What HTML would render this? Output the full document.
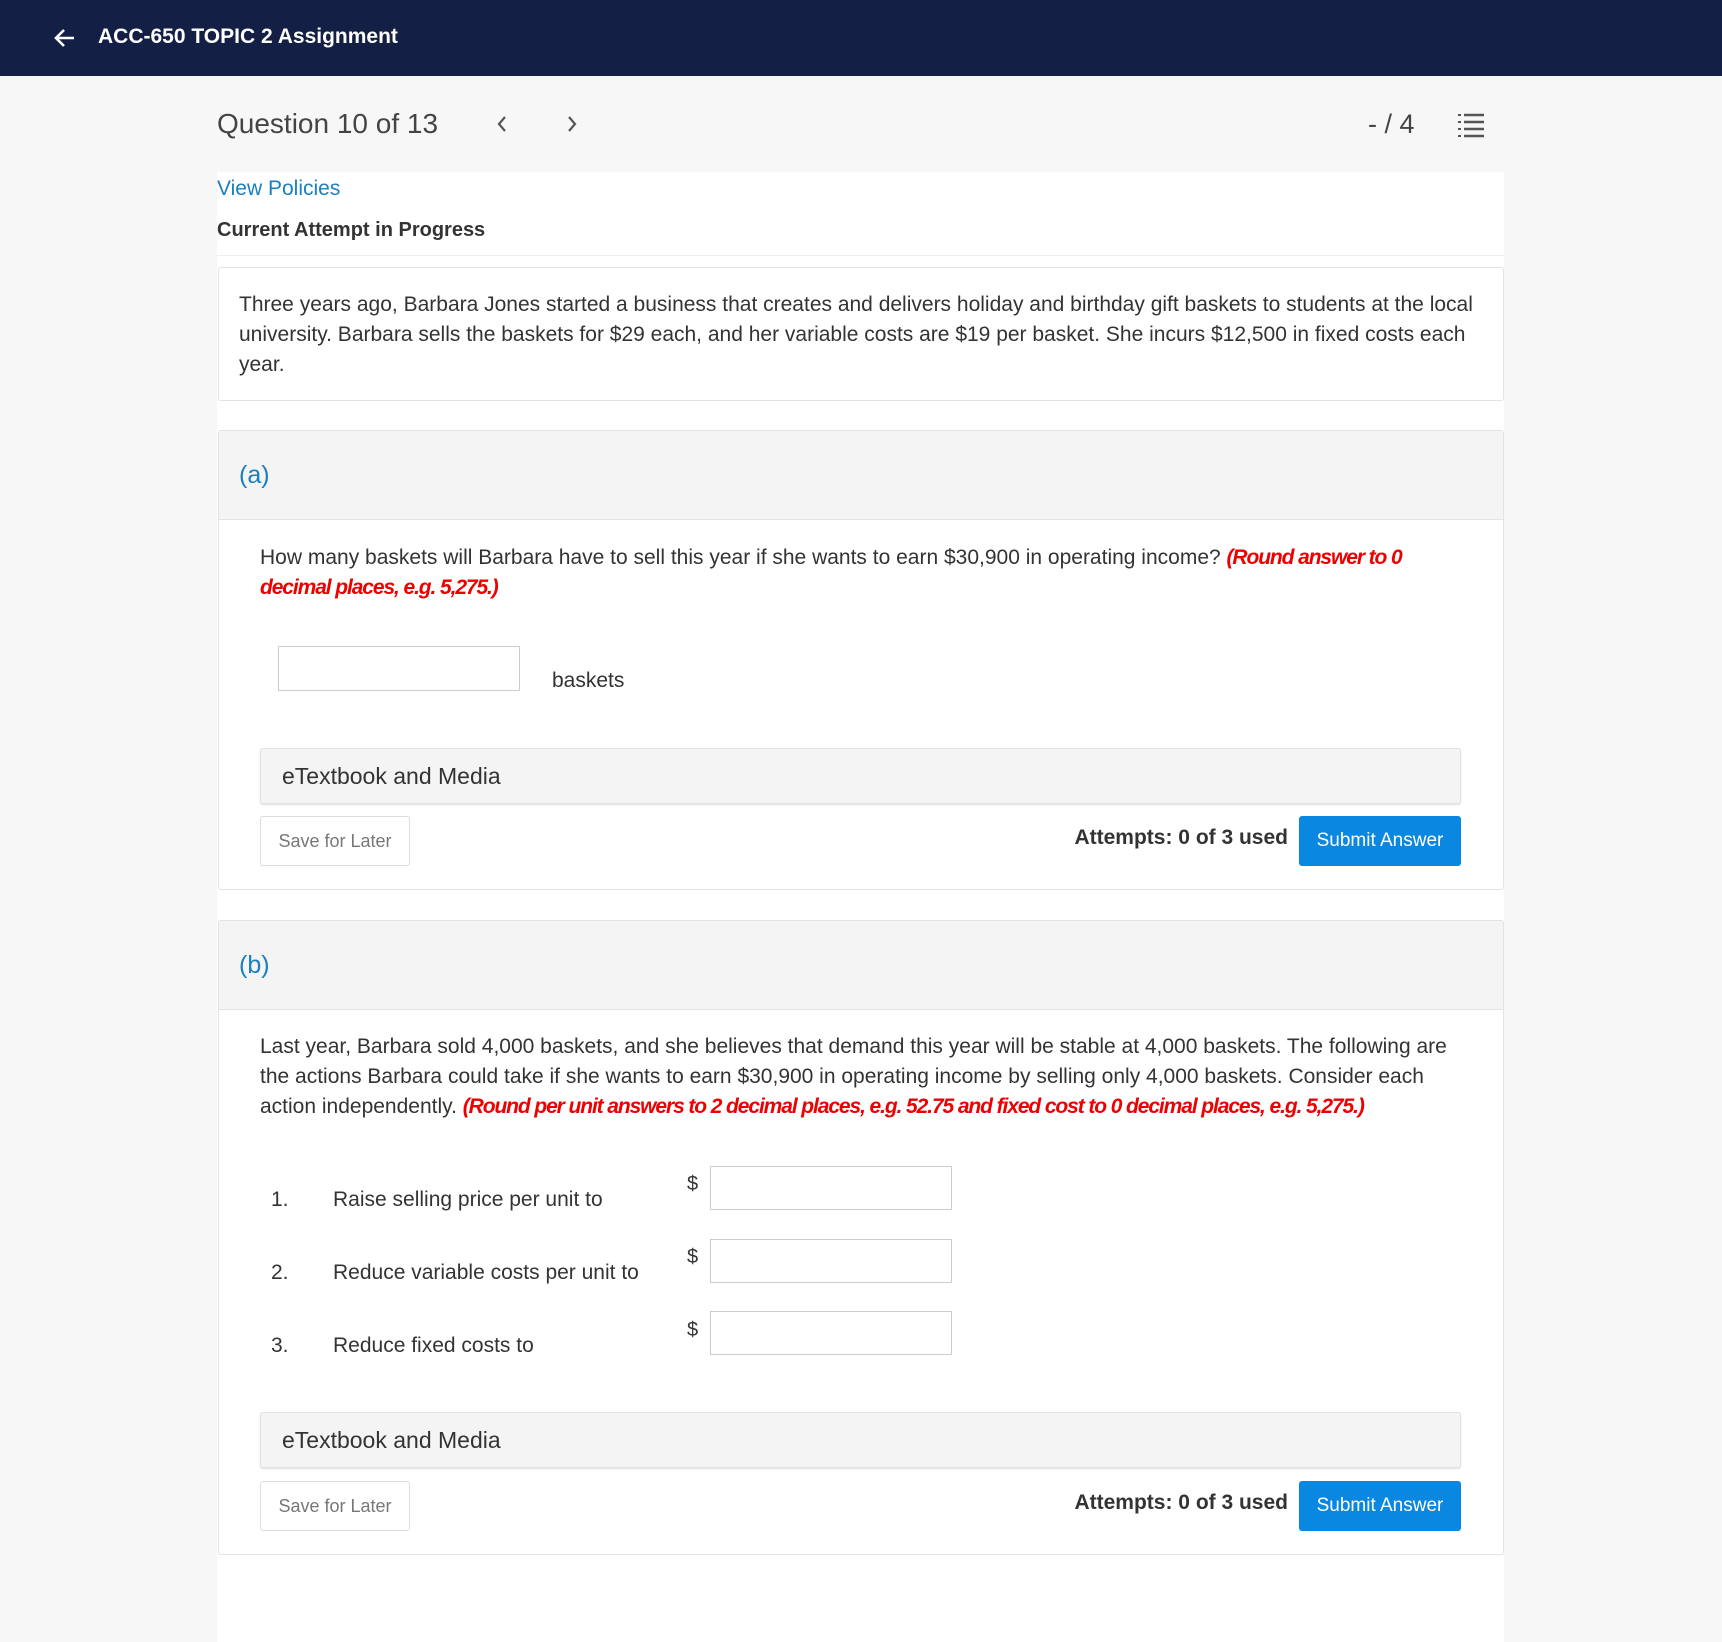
<!DOCTYPE html>
<html><head><meta charset="utf-8"><style>
*{margin:0;padding:0;box-sizing:border-box}
body{width:1722px;height:1642px;background:#f7f7f7;font-family:"Liberation Sans",sans-serif;color:#333;position:relative;overflow:hidden}
.a{position:absolute;white-space:nowrap}
.hdr{left:0;top:0;width:1722px;height:76px;background:#141f45}
.wrap{left:217px;top:172px;width:1287px;height:1470px;background:#fff}
.box{background:#fff;border:1px solid #e3e3e3;border-radius:3px}
.gh{background:#f4f4f4;border-bottom:1px solid #e3e3e3}
.inp{border:1px solid #ccc;background:#fff}
.et{background:#f4f4f4;border:1px solid #e2e2e2;border-radius:3px;box-shadow:0 1px 2px rgba(0,0,0,.12);font-size:23px;color:#333;padding-left:21px;line-height:55px}
.sv{border:1px solid #ddd;border-radius:3px;font-size:18px;color:#777;text-align:center;line-height:48px;background:#fff}
.sb{background:#0a87e0;border-radius:3px;color:#fff;font-size:19px;text-align:center;line-height:50px}
.at{font-size:21px;font-weight:bold;color:#333}
.p{font-size:21px;line-height:30px;color:#333}
.red{color:#e00;font-weight:bold;font-style:italic;letter-spacing:-1.1px}
.l{font-size:21px}
</style></head><body>
<div class="a hdr"></div>
<svg class="a" style="left:53px;top:26px" width="24" height="24" viewBox="0 0 24 24"><path d="M21 12H4M11 4l-8 8 8 8" stroke="#fff" stroke-width="2.6" fill="none"/></svg>
<div class="a" style="left:98px;top:25px;font-size:21px;font-weight:bold;color:#fff">ACC-650 TOPIC 2 Assignment</div>
<div class="a" style="left:217px;top:108px;font-size:28px;color:#444">Question 10 of 13</div>
<svg class="a" style="left:495px;top:114px" width="14" height="20" viewBox="0 0 14 20"><path d="M10 3L4 10l6 7" stroke="#555" stroke-width="2.2" fill="none"/></svg>
<svg class="a" style="left:565px;top:114px" width="14" height="20" viewBox="0 0 14 20"><path d="M4 3l6 7-6 7" stroke="#555" stroke-width="2.2" fill="none"/></svg>
<div class="a" style="left:1368px;top:109px;font-size:27px;color:#444">- / 4</div>
<svg class="a" style="left:1457px;top:112px" width="28" height="26" viewBox="0 0 28 26"><g stroke="#555" stroke-width="2.4"><path d="M7 3h20M7 10h20M7 17h20M7 24h20"/><path d="M1 3h3M1 10h3M1 17h3M1 24h3" stroke-width="2"/></g></svg>
<div class="a wrap"></div>
<div class="a" style="left:217px;top:177px;font-size:21px;color:#1a7fc1">View Policies</div>
<div class="a" style="left:217px;top:219px;font-size:20px;font-weight:bold;color:#333">Current Attempt in Progress</div>
<div class="a" style="left:217px;top:255px;width:1287px;height:1px;background:#eee"></div>
<div class="a box" style="left:218px;top:267px;width:1286px;height:134px"></div>
<div class="a p" style="left:239px;top:290px">Three years ago, Barbara Jones started a business that creates and delivers holiday and birthday gift baskets to students at the local<br>university. Barbara sells the baskets for $29 each, and her variable costs are $19 per basket. She incurs $12,500 in fixed costs each<br>year.</div>

<div class="a box" style="left:218px;top:430px;width:1286px;height:460px"></div>
<div class="a gh" style="left:219px;top:431px;width:1284px;height:89px"></div>
<div class="a" style="left:239px;top:461px;font-size:25px;color:#1a7fc1">(a)</div>
<div class="a p" style="left:260px;top:543px">How many baskets will Barbara have to sell this year if she wants to earn $30,900 in operating income? <span class="red">(Round answer to 0</span><br><span class="red">decimal places, e.g. 5,275.)</span></div>
<div class="a inp" style="left:278px;top:646px;width:242px;height:45px"></div>
<div class="a l" style="left:552px;top:669px">baskets</div>
<div class="a et" style="left:260px;top:748px;width:1201px;height:56px">eTextbook and Media</div>
<div class="a sv" style="left:260px;top:816px;width:150px;height:50px">Save for Later</div>
<div class="a at" style="right:434px;top:826px">Attempts: 0 of 3 used</div>
<div class="a sb" style="left:1299px;top:816px;width:162px;height:50px">Submit Answer</div>

<div class="a box" style="left:218px;top:920px;width:1286px;height:635px"></div>
<div class="a gh" style="left:219px;top:921px;width:1284px;height:89px"></div>
<div class="a" style="left:239px;top:951px;font-size:25px;color:#1a7fc1">(b)</div>
<div class="a p" style="left:260px;top:1032px">Last year, Barbara sold 4,000 baskets, and she believes that demand this year will be stable at 4,000 baskets. The following are<br>the actions Barbara could take if she wants to earn $30,900 in operating income by selling only 4,000 baskets. Consider each<br>action independently. <span class="red">(Round per unit answers to 2 decimal places, e.g. 52.75 and fixed cost to 0 decimal places, e.g. 5,275.)</span></div>

<div class="a l" style="left:271px;top:1188px">1.</div>
<div class="a l" style="left:333px;top:1188px">Raise selling price per unit to</div>
<div class="a" style="left:687px;top:1173px;font-size:20px">$</div>
<div class="a inp" style="left:710px;top:1166px;width:242px;height:44px"></div>
<div class="a l" style="left:271px;top:1261px">2.</div>
<div class="a l" style="left:333px;top:1261px">Reduce variable costs per unit to</div>
<div class="a" style="left:687px;top:1246px;font-size:20px">$</div>
<div class="a inp" style="left:710px;top:1239px;width:242px;height:44px"></div>
<div class="a l" style="left:271px;top:1334px">3.</div>
<div class="a l" style="left:333px;top:1334px">Reduce fixed costs to</div>
<div class="a" style="left:687px;top:1319px;font-size:20px">$</div>
<div class="a inp" style="left:710px;top:1311px;width:242px;height:44px"></div>

<div class="a et" style="left:260px;top:1412px;width:1201px;height:56px">eTextbook and Media</div>
<div class="a sv" style="left:260px;top:1481px;width:150px;height:50px">Save for Later</div>
<div class="a at" style="right:434px;top:1491px">Attempts: 0 of 3 used</div>
<div class="a sb" style="left:1299px;top:1481px;width:162px;height:50px">Submit Answer</div>
</body></html>
